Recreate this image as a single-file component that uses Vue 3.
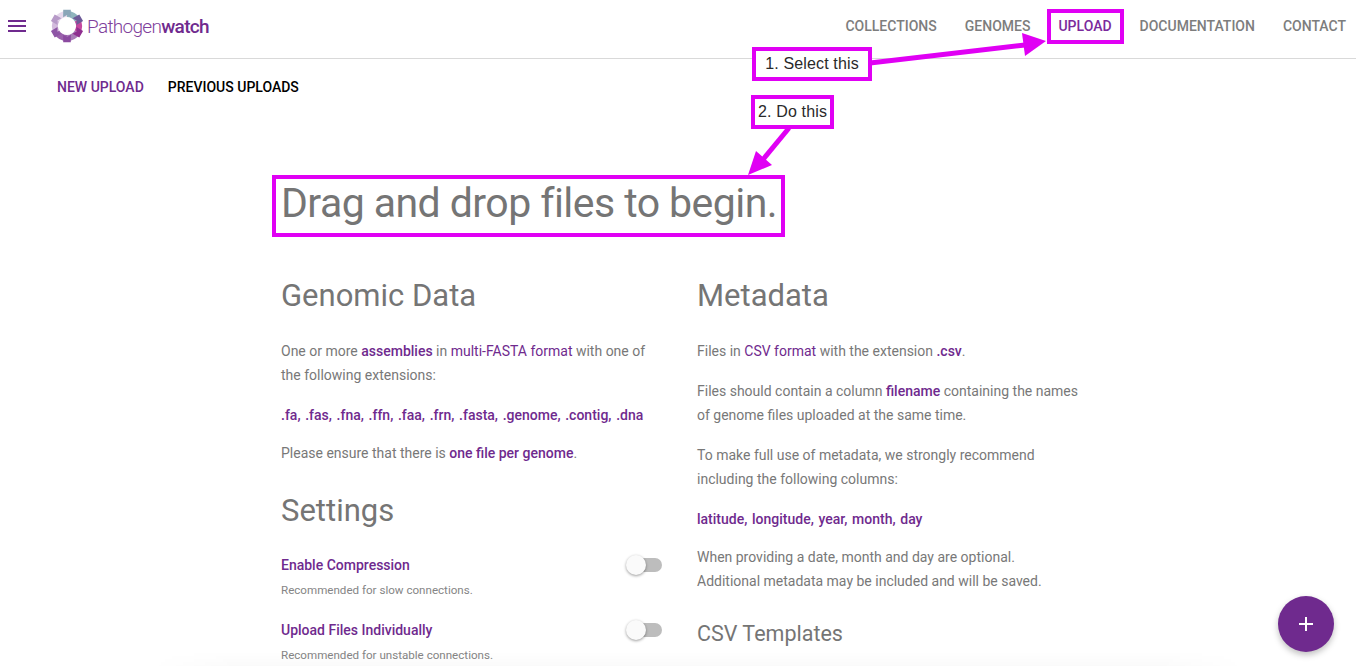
<script setup>
const navItems = ['Collections', 'Genomes', 'Upload', 'Documentation', 'Contact'];
const extensions = '.fa, .fas, .fna, .ffn, .faa, .frn, .fasta, .genome, .contig, .dna';
const columns = 'latitude, longitude, year, month, day';
const settings = [
  { title: 'Enable Compression', hint: 'Recommended for slow connections.' },
  { title: 'Upload Files Individually', hint: 'Recommended for unstable connections.' },
];

// logo: six arcs clockwise from the top, a darker tooth where two of them meet
const arcColors = ['#8fb4bd', '#c4479f', '#a97cb8', '#9a62ac', '#d3bbdd', '#e6d8ec'];
const toothColors = ['#8aa6b8', '#6d5a98', '#8f2f90', '#8b4aa0', '#8e55a5', '#b79ac8'];

function point(angle, radius) {
  const rad = (angle * Math.PI) / 180;
  return `${(Math.sin(rad) * radius).toFixed(2)} ${(-Math.cos(rad) * radius).toFixed(2)}`;
}

const arcs = arcColors.map((color, i) => ({
  color,
  d: `M${point(i * 60, 12)} A12 12 0 0 1 ${point((i + 1) * 60, 12)}`,
}));

const teeth = toothColors.map((color, i) => {
  const a = i * 60;
  return {
    color,
    d: `M${point(a - 24, 9.5)} L${point(a - 13, 16.8)} L${point(a + 13, 16.8)} L${point(a + 24, 9.5)} L${point(a, 11)}z`,
  };
});
</script>

<template>
  <div class="page">
    <header class="topbar">
      <button class="menu" aria-label="Menu"><span /><span /><span /></button>
      <div class="brand">
        <svg width="34" height="34" viewBox="-17 -17 34 34" aria-hidden="true">
          <path v-for="arc in arcs" :key="arc.color" :d="arc.d" :stroke="arc.color" fill="none" stroke-width="6" />
          <path v-for="tooth in teeth" :key="tooth.color" :d="tooth.d" :fill="tooth.color" />
        </svg>
        <span class="brand__name">Pathogen<b>watch</b></span>
      </div>
      <nav class="nav">
        <a v-for="item in navItems" :key="item" :class="{ active: item === 'Upload' }">{{ item }}</a>
      </nav>
    </header>

    <div class="tabs">
      <a class="active">New Upload</a>
      <a>Previous Uploads</a>
    </div>

    <main class="content">
      <h1>Drag and drop files to begin.</h1>
      <div class="columns">
        <section>
          <h2>Genomic Data</h2>
          <p>One or more <b>assemblies</b> in <a>multi-FASTA format</a> with one of the following extensions:</p>
          <p class="mono">{{ extensions }}</p>
          <p>Please ensure that there is <b>one file per genome</b>.</p>
          <h2 class="settings-title">Settings</h2>
          <div v-for="item in settings" :key="item.title" class="setting">
            <div>
              <strong>{{ item.title }}</strong>
              <small>{{ item.hint }}</small>
            </div>
            <span class="toggle"><i /></span>
          </div>
        </section>
        <section>
          <h2>Metadata</h2>
          <p>Files in <a>CSV format</a> with the extension <b>.csv</b>.</p>
          <p>Files should contain a column <b>filename</b> containing the names of genome files uploaded at the same time.</p>
          <p>To make full use of metadata, we strongly recommend including the following columns:</p>
          <p class="mono">{{ columns }}</p>
          <p>When providing a date, month and day are optional.<br />Additional metadata may be included and will be saved.</p>
          <h3>CSV Templates</h3>
        </section>
      </div>
    </main>

    <div class="fade" />

    <button class="fab" aria-label="Add files">
      <svg width="16" height="16" viewBox="0 0 16 16"><path d="M8 1v14M1 8h14" stroke="#fff" stroke-width="2" /></svg>
    </button>

    <!-- annotations drawn over the screenshot -->
    <div class="callout callout--nav" />
    <div class="callout callout--one">1. Select this</div>
    <div class="callout callout--two">2. Do this</div>
    <div class="callout callout--heading" />
    <svg class="arrows" width="1356" height="666" aria-hidden="true">
      <path d="M870 63 L1025 45" stroke="#e000f4" stroke-width="5" fill="none" />
      <path d="M1046 41 L1022 33 L1025 56z" fill="#e000f4" />
      <path d="M789 128 L761 162" stroke="#e000f4" stroke-width="5" fill="none" />
      <path d="M748 175 L756 151 L772 165z" fill="#e000f4" />
    </svg>
  </div>
</template>

<style scoped>
.page {
  position: relative;
  height: 666px;
  overflow: hidden;
  background: #fff;
  font-family: Roboto, sans-serif;
  font-size: 14px;
  color: #787878;
}

.topbar {
  display: flex;
  align-items: center;
  height: 52px;
  border-bottom: 1px solid #d9d9d9;
  padding: 0 10px 6px 8px;
}

.menu {
  display: grid;
  gap: 3px;
  width: 18px;
  padding: 0;
  border: 0;
  background: none;
}

.menu span {
  display: block;
  height: 2px;
  background: #6f2a8e;
}

.brand {
  display: flex;
  align-items: center;
  gap: 3px;
  margin-left: 24px;
}

.brand__name {
  font-size: 19px;
  font-weight: 300;
  letter-spacing: -0.7px;
  color: #7f3f9c;
}

.brand__name b {
  color: #6f2a8e;
  font-weight: 500;
}

.nav {
  display: flex;
  gap: 28px;
  margin-left: auto;
}

.nav a {
  font-weight: 500;
  text-transform: uppercase;
  color: #7d7d7d;
}

.nav a.active {
  color: #7b2a9c;
}

.tabs {
  display: flex;
  gap: 24px;
  padding: 20px 0 0 57px;
  line-height: 17px;
}

.tabs a {
  font-weight: 500;
  text-transform: uppercase;
  color: #000;
}

.tabs a.active {
  color: #6f2a8e;
}

.content {
  width: 800px;
  margin-left: 281px;
}

h1,
h2,
h3 {
  margin: 0;
  font-weight: 400;
  color: #757575;
}

h1 {
  margin-top: 77px;
  font-size: 41px;
  line-height: 60px;
  letter-spacing: -0.55px;
}

.columns {
  display: grid;
  grid-template-columns: 383px 383px;
  column-gap: 33px;
  margin-top: 41px;
}

h2 {
  font-size: 31px;
  line-height: 44px;
  margin-bottom: 21px;
}

h3 {
  font-size: 21.5px;
  line-height: 32px;
  margin-top: 25px;
}

p {
  margin: 0 0 16px;
  line-height: 24px;
}

p b {
  font-weight: 500;
  color: #6f2a8e;
}

p a {
  color: #6f2a8e;
}

p.mono {
  margin-bottom: 14px;
  font-weight: 500;
  word-spacing: 1.2px;
  color: #6f2a8e;
}

.settings-title {
  margin: 24px 0 24px;
}

.setting {
  display: flex;
  justify-content: space-between;
  align-items: flex-start;
  height: 65px;
  padding-right: 2px;
}

.setting strong {
  display: block;
  font-weight: 500;
  color: #6f2a8e;
  line-height: 17px;
}

.setting small {
  display: block;
  margin-top: 9px;
  font-size: 11.6px;
  line-height: 14px;
  color: #858585;
}

.toggle {
  position: relative;
  display: block;
  width: 34px;
  height: 14px;
  margin-top: 1px;
  border-radius: 7px;
  background: #bdbdbd;
}

.toggle i {
  position: absolute;
  left: -2px;
  top: -3px;
  width: 20px;
  height: 20px;
  border-radius: 50%;
  background: #fafafa;
  box-shadow: 0 1px 3px rgba(0, 0, 0, 0.4);
}

.fade {
  position: absolute;
  left: 150px;
  right: 110px;
  bottom: 0;
  height: 14px;
  background: linear-gradient(rgba(0, 0, 0, 0), rgba(0, 0, 0, 0.018));
  mask-image: linear-gradient(90deg, transparent, #000 8%, #000 92%, transparent);
}

.fab {
  position: absolute;
  left: 1278px;
  top: 596px;
  display: flex;
  align-items: center;
  justify-content: center;
  width: 56px;
  height: 56px;
  padding: 0;
  border: 0;
  border-radius: 50%;
  background: #6f2a8e;
  box-shadow: 0 3px 6px rgba(0, 0, 0, 0.25);
}

.callout {
  position: absolute;
  box-sizing: border-box;
  border: 4px solid #e000f4;
  display: flex;
  align-items: center;
  justify-content: center;
  font-family: "Liberation Sans", sans-serif;
  font-size: 16px;
  letter-spacing: 0.15px;
  color: #2a2a2a;
  background: #fff;
  white-space: nowrap;
}

.callout--nav {
  left: 1047px;
  top: 9px;
  width: 77px;
  height: 35px;
  background: none;
}

.callout--one {
  left: 752px;
  top: 47px;
  width: 120px;
  height: 34px;
}

.callout--two {
  left: 751px;
  top: 95px;
  width: 83px;
  height: 34px;
}

.callout--heading {
  left: 272px;
  top: 175px;
  width: 513px;
  height: 62px;
  background: none;
}

.arrows {
  position: absolute;
  left: 0;
  top: 0;
  pointer-events: none;
}
</style>

<style>
body {
  margin: 0;
}
</style>
